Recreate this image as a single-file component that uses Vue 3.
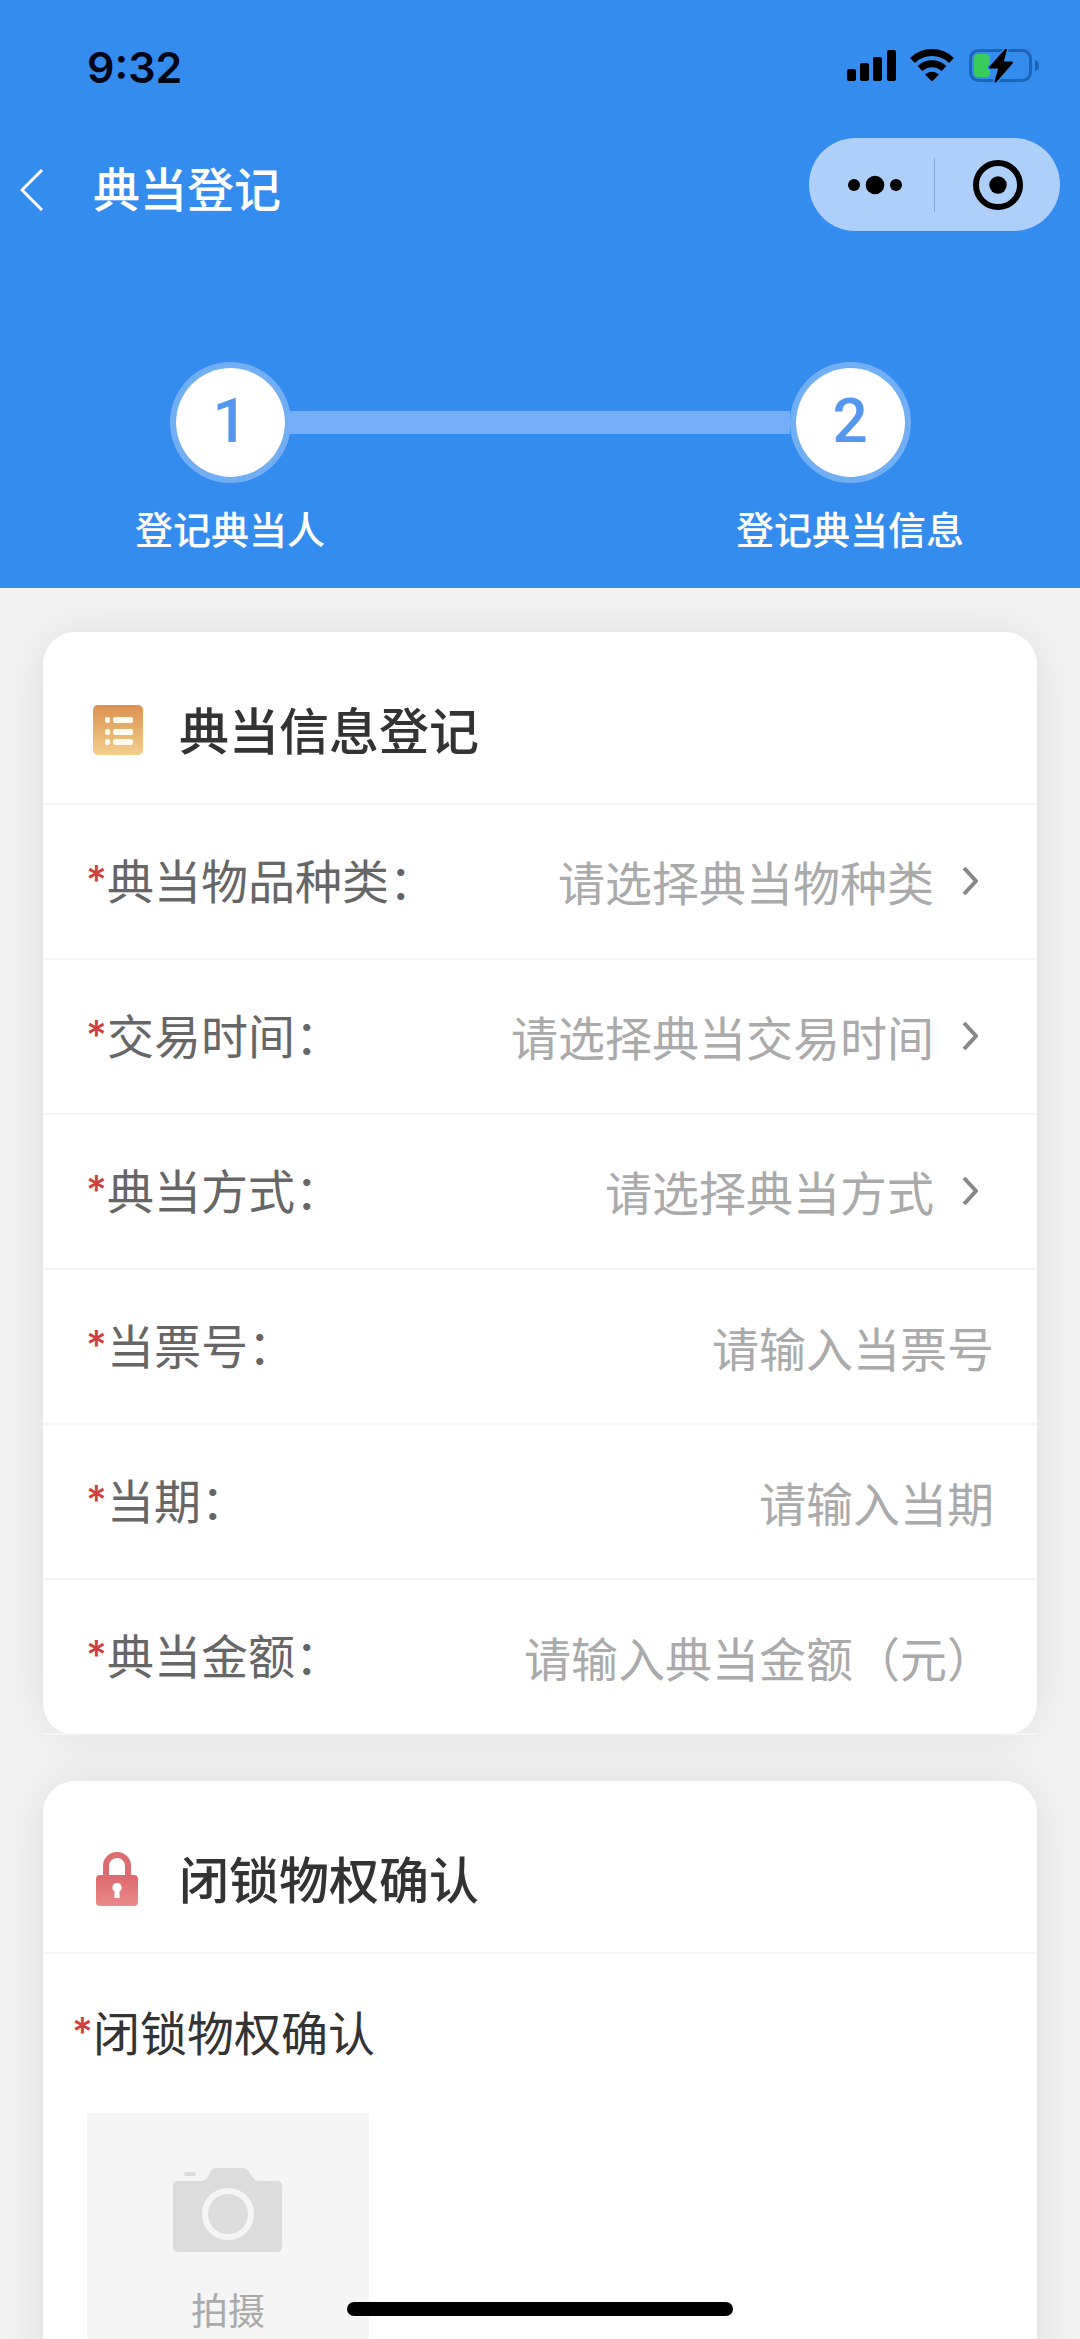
<script setup>
import { reactive } from 'vue'

const fields = [
  { id: 'category', label: '典当物品种类：', hint: '请选择典当物种类', picker: true },
  { id: 'time', label: '交易时间：', hint: '请选择典当交易时间', picker: true },
  { id: 'method', label: '典当方式：', hint: '请选择典当方式', picker: true },
  { id: 'ticket', label: '当票号：', hint: '请输入当票号' },
  { id: 'term', label: '当期：', hint: '请输入当期' },
  { id: 'amount', label: '典当金额：', hint: '请输入典当金额（元）' }
]

const form = reactive({ category: '', time: '', method: '', ticket: '', term: '', amount: '' })
</script>

<template>
  <div class="app">
    <header class="top">
      <div class="status">
        <span class="clock">9:32</span>
        <svg class="indicators" width="194" height="36" viewBox="0 0 194 36" aria-hidden="true">
          <!-- signal -->
          <rect x="1" y="20" width="9" height="12" rx="2" />
          <rect x="14" y="14" width="9" height="18" rx="2" />
          <rect x="27" y="8" width="9" height="24" rx="2" />
          <rect x="41" y="1" width="9" height="31" rx="2" />
          <!-- wifi -->
          <g fill="none" stroke="#000" stroke-width="7">
            <path d="M66.500 11.500a28 28 0 0 1 39 0" />
            <path d="M74 19.500a17.500 17.500 0 0 1 24 0" />
          </g>
          <path d="M86 32.500l-7-7a10 10 0 0 1 14 0z" />
          <!-- battery -->
          <rect x="124.500" y="1.500" width="60" height="30" rx="8" fill="none" stroke="#1f63b4" stroke-width="3" />
          <path d="M189 11q4 1 4 5.500t-4 5.500z" fill="#1f63b4" />
          <rect x="128" y="5" width="16" height="23" rx="4" fill="#38cb5b" />
          <path d="M160 0.500L144 18.500h9.500L149.500 32.500L166 13.500h-9.500z" fill="#000" stroke="#358cef" stroke-width="5" paint-order="stroke" stroke-linejoin="round" />
          <path d="M160 0.500L144 18.500h9.500L149.500 32.500L166 13.500h-9.500z" stroke="#000" stroke-width="2" stroke-linejoin="round" />
        </svg>
      </div>

      <div class="nav">
        <div class="nav-title">
          <button class="back" type="button" aria-label="返回">
            <svg width="24" height="42" viewBox="0 0 24 42"><path d="M22 1L2 21l20 20" fill="none" stroke="#fff" stroke-width="3" /></svg>
          </button>
          <h1>典当登记</h1>
        </div>
        <div class="capsule">
          <button type="button" aria-label="更多">
            <svg width="60" height="20" viewBox="-6 0 60 20"><circle cx="6" cy="10" r="6" /><circle cx="27" cy="10" r="9.300" /><circle cx="48" cy="10" r="6" /></svg>
          </button>
          <i></i>
          <button type="button" aria-label="关闭">
            <svg width="50" height="50" viewBox="0 0 50 50"><circle cx="25" cy="25" r="22" fill="none" stroke="#000" stroke-width="6" /><circle cx="25" cy="25" r="8.700" /></svg>
          </button>
        </div>
      </div>

      <div class="steps">
        <div class="step"><b>1</b><span>登记典当人</span></div>
        <div class="line"></div>
        <div class="step"><b>2</b><span>登记典当信息</span></div>
      </div>
    </header>

    <main>
      <section class="card">
        <div class="card-head">
          <svg width="50" height="50" viewBox="0 0 50 50" aria-hidden="true">
            <defs>
              <linearGradient id="amber" x1="0" y1="0" x2="0" y2="1">
                <stop offset="0" stop-color="#dc9150" />
                <stop offset="1" stop-color="#f2cf8b" />
              </linearGradient>
            </defs>
            <rect width="50" height="50" rx="5" fill="url(#amber)" />
            <g fill="#fffaf0">
              <rect x="12" y="12" width="5" height="6" rx="2" /><rect x="20" y="12" width="20" height="6" rx="2" />
              <rect x="12" y="24" width="5" height="6" rx="2" /><rect x="20" y="24" width="20" height="6" rx="2" />
              <rect x="12" y="34" width="5" height="6" rx="2" /><rect x="20" y="34" width="20" height="6" rx="2" />
            </g>
          </svg>
          <h2>典当信息登记</h2>
        </div>

        <div v-for="f in fields" :key="f.id" class="row">
          <label :for="f.id"><em>*</em>{{ f.label }}</label>
          <template v-if="f.picker">
            <select :id="f.id" v-model="form[f.id]">
              <option value="">{{ f.hint }}</option>
            </select>
            <svg class="arrow" width="16" height="28" viewBox="0 0 16 28" aria-hidden="true"><path d="M2 1l12 13L2 27" fill="none" stroke="#888" stroke-width="4" /></svg>
          </template>
          <input v-else :id="f.id" v-model="form[f.id]" type="text" :placeholder="f.hint" />
        </div>
      </section>

      <section class="card">
        <div class="card-head">
          <svg width="50" height="56" viewBox="0 0 50 56" aria-hidden="true">
            <defs>
              <linearGradient id="rose" x1="0" y1="0" x2="0" y2="1">
                <stop offset="0" stop-color="#dc696d" />
                <stop offset="1" stop-color="#e98a8c" />
              </linearGradient>
            </defs>
            <path d="M13 27V15a11 11 0 0 1 22 0V27" fill="none" stroke="#dc6c70" stroke-width="6" />
            <rect x="3" y="24" width="42" height="31" rx="4" fill="url(#rose)" />
            <path d="M24 32a4.500 4.500 0 0 1 2.500 8.300V47h-5v-6.700A4.500 4.500 0 0 1 24 32z" fill="#fff" />
          </svg>
          <h2>闭锁物权确认</h2>
        </div>
        <div class="proof">
          <p><em>*</em>闭锁物权确认</p>
          <button class="upload" type="button">
            <svg width="110" height="84" viewBox="0 0 110 84" aria-hidden="true">
              <rect x="11" y="4" width="12" height="4" rx="2" fill="#dcdcdc" />
              <path d="M5 13h24q3 0 5-3l3-6q2-4 6-4h26q5 0 7 4l4 6q2 3 5 3h19q5 0 5 5v61q0 5-5 5H5q-5 0-5-5V18q0-5 5-5z" fill="#dcdcdc" />
              <circle cx="55" cy="46" r="23" fill="none" stroke="#f5f5f5" stroke-width="6" />
            </svg>
            <span>拍摄</span>
          </button>
        </div>
      </section>
    </main>

    <div class="home-bar"></div>
  </div>
</template>

<style>
body {
  background: #f2f2f2;
}
</style>

<style scoped>
* {
  box-sizing: border-box;
}
.app {
  position: relative;
  display: flex;
  flex-direction: column;
  height: 100vh;
  overflow: hidden;
  background: #f2f2f2;
  font-family: "Noto Sans CJK SC", sans-serif;
  color: #333;
}
button,
select,
input {
  margin: 0;
  padding: 0;
  border: 0;
  background: none;
  font: inherit;
}
h1,
h2,
p {
  margin: 0;
}
em {
  display: inline-block;
  width: 21px;
  color: #cf3f3c;
  font: 500 40px/40px Inter, sans-serif;
  text-align: center;
  vertical-align: 5px;
}
svg {
  display: block;
  flex: none;
}

/* header */
.top {
  flex: none;
  padding-bottom: 32px;
  background: #358cef;
  color: #fff;
}
.status {
  display: flex;
  justify-content: space-between;
  align-items: center;
  height: 138px;
  padding: 0 40px 5px 87px;
}
.clock {
  color: #020617;
  font: 600 43px/56px Inter, sans-serif;
}
.nav {
  display: flex;
  justify-content: space-between;
  align-items: center;
  padding: 0 20px;
}
.nav-title {
  display: flex;
  align-items: center;
  gap: 49px;
  padding-top: 10px;
}
h1 {
  padding-bottom: 6px;
  font-size: 47px;
  line-height: 64px;
  font-weight: 500;
}
.capsule {
  display: flex;
  align-items: center;
  width: 251px;
  height: 93px;
  border-radius: 47px;
  background: #aecffa;
}
.capsule button {
  display: flex;
  flex: 1;
  justify-content: center;
}
.capsule i {
  width: 1px;
  height: 54px;
  background: #8aaad6;
}
.steps {
  display: flex;
  padding: 131px 110px 0;
}
.step {
  display: flex;
  flex-direction: column;
  align-items: center;
  gap: 17px;
  width: 240px;
  font-size: 38px;
  line-height: 56px;
  font-weight: 500;
  white-space: nowrap;
}
.step b {
  width: 121px;
  height: 121px;
  border: 6px solid rgba(255, 255, 255, 0.3);
  border-radius: 50%;
  background: #fff;
  background-clip: padding-box;
  color: #5596ee;
  font: 500 62px/106px Roboto, sans-serif;
  text-align: center;
}
.line {
  flex: 1;
  height: 23px;
  margin: 49px -60px 0;
  background: #75adf6;
}

/* cards */
main {
  display: flex;
  flex: 1;
  flex-direction: column;
  gap: 46px;
  min-height: 0;
  padding: 44px 43px;
  overflow-y: auto;
  scrollbar-width: none;
}
.card {
  flex: none;
  border-radius: 32px;
  background: #fff;
  box-shadow: 0 0 50px rgba(0, 0, 0, 0.08);
}
.card-head {
  display: flex;
  align-items: center;
  gap: 36px;
  padding: 62px 50px 37px;
  border-bottom: 2px solid #f5f5f5;
}
h2 {
  padding-bottom: 4px;
  font-size: 50px;
  line-height: 68px;
  font-weight: 500;
}
.row {
  display: flex;
  align-items: center;
  padding: 42px 43px 43px;
  border-bottom: 2px solid #f5f5f5;
  color: #666;
  font-size: 47px;
  line-height: 64px;
}
.row label {
  flex: none;
  padding-bottom: 4px;
}
.row input,
.row select {
  flex: 1;
  min-width: 0;
  height: 64px;
  padding-top: 2px;
  outline: 0;
  color: #aaa;
  text-align: right;
}
.row select {
  appearance: none;
  padding: 0 0 6px;
  text-align-last: right;
}
.row input::placeholder {
  color: #aaa;
}
.arrow {
  margin: 0 16px 0 28px;
}

/* upload */
.proof {
  padding: 45px 29px 44px;
}
.proof p {
  font-size: 47px;
  line-height: 64px;
}
.upload {
  display: flex;
  flex-direction: column;
  align-items: center;
  gap: 31px;
  width: 282px;
  height: 282px;
  margin: 50px 0 0 15px;
  padding-top: 55px;
  background: #f5f5f5;
  color: #aaa;
  font-size: 37px;
  line-height: 52px;
}
.home-bar {
  position: absolute;
  bottom: 23px;
  left: 50%;
  width: 386px;
  height: 14px;
  margin-left: -193px;
  border-radius: 7px;
  background: #000;
}
</style>
